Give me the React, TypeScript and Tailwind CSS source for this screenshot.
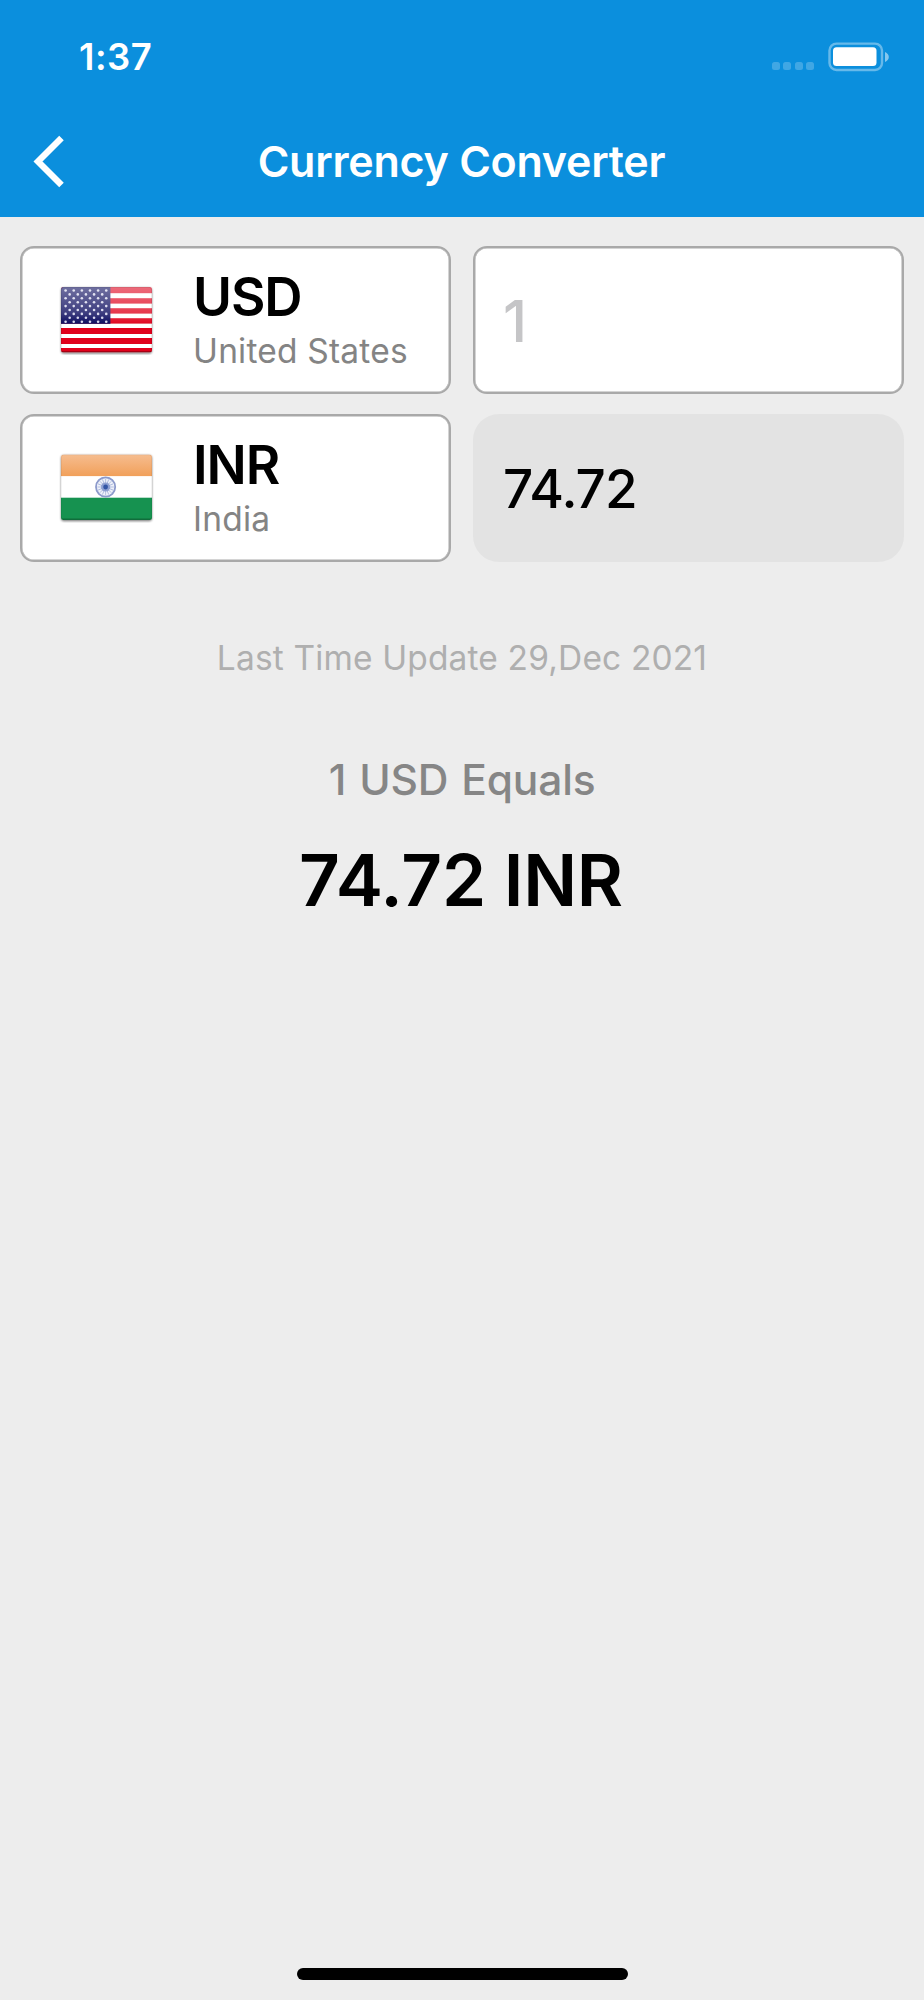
import React from "react";

const RED_STRIPES = [
  [0, 6.2],
  [11.2, 5.4],
  [21.2, 5.4],
  [31.2, 5.4],
  [41, 6],
  [51, 6],
  [61, 4.6],
];

function FlagUS() {
  const stars: { x: number; y: number }[] = [];
  for (let row = 0; row < 9; row++) {
    const odd = row % 2 === 1;
    for (let i = 0; i < (odd ? 5 : 6); i++) {
      stars.push({ x: 4.6 + i * 8.13 + (odd ? 4.07 : 0), y: 3.5 + row * 3.9 });
    }
  }
  return (
    <svg className="h-[70px] w-[95px]" viewBox="-2 -2 95 70" role="img" aria-label="United States flag">
      <defs>
        <clipPath id="us-clip">
          <rect width="91" height="65.6" rx="2.5" />
        </clipPath>
        <linearGradient id="us-gloss" x1="0" y1="0" x2="0" y2="1">
          <stop offset="0" stopColor="#fff" stopOpacity="0.42" />
          <stop offset="0.7" stopColor="#fff" stopOpacity="0.22" />
          <stop offset="1" stopColor="#fff" stopOpacity="0.02" />
        </linearGradient>
        <filter id="us-shadow" x="-5%" y="-5%" width="110%" height="115%">
          <feGaussianBlur stdDeviation="0.9" />
        </filter>
      </defs>
      <rect y="0.8" width="91" height="66" rx="3" fill="#000" opacity="0.5" filter="url(#us-shadow)" />
      <g clipPath="url(#us-clip)">
        <rect width="91" height="66" fill="#fff" />
        {RED_STRIPES.map(([y, h]) => (
          <rect key={y} y={y} width="91" height={h} fill="#e0001b" />
        ))}
        <rect width="49.4" height="36.8" fill="#08085c" />
        {stars.map((s, i) => (
          <circle key={i} cx={s.x} cy={s.y} r="1.3" fill="#d4d4ea" />
        ))}
        <rect width="91" height="36.8" fill="url(#us-gloss)" />
        <rect y="64" width="91" height="2" fill="#000" opacity="0.25" />
        <rect x="0.4" y="0.4" width="90.2" height="65" rx="2.5" fill="none" stroke="#000" strokeOpacity="0.12" strokeWidth="0.8" />
      </g>
    </svg>
  );
}

function FlagIN() {
  return (
    <svg className="h-[70px] w-[95px]" viewBox="-2 -1.4 95 70" role="img" aria-label="India flag">
      <defs>
        <clipPath id="in-clip">
          <rect width="91" height="65.6" rx="2.5" />
        </clipPath>
        <linearGradient id="in-saffron" x1="0" y1="0" x2="0" y2="1">
          <stop offset="0" stopColor="#f6bd90" />
          <stop offset="1" stopColor="#f1a05a" />
        </linearGradient>
        <filter id="in-shadow" x="-5%" y="-5%" width="110%" height="115%">
          <feGaussianBlur stdDeviation="0.9" />
        </filter>
      </defs>
      <rect y="0.8" width="91" height="66" rx="3" fill="#000" opacity="0.5" filter="url(#in-shadow)" />
      <g clipPath="url(#in-clip)">
        <rect width="91" height="66" fill="#fff" />
        <rect width="91" height="21.7" fill="url(#in-saffron)" />
        <rect y="43.3" width="91" height="23" fill="#169250" />
        <rect y="64" width="91" height="2" fill="#000" opacity="0.22" />
        <rect x="0.4" y="0.4" width="90.2" height="65" rx="2.5" fill="none" stroke="#000" strokeOpacity="0.08" strokeWidth="0.8" />
      </g>
      <circle cx="44.6" cy="32.6" r="9.6" fill="#eef1f9" stroke="#8c9acb" strokeWidth="1.8" />
      {Array.from({ length: 8 }, (_, i) => (
        <line
          key={i}
          x1="44.6"
          y1="24.4"
          x2="44.6"
          y2="40.8"
          stroke="#8f9fd0"
          strokeWidth="0.6"
          transform={`rotate(${i * 22.5} 44.6 32.6)`}
        />
      ))}
      <circle cx="44.6" cy="32.6" r="4.6" fill="#7f93cc" opacity="0.8" />
      <circle cx="44.6" cy="32.6" r="2.4" fill="#3355a5" />
    </svg>
  );
}

function StatusBar() {
  return (
    <div className="flex h-[105px] items-center justify-between pt-[9px] pr-[34px] pl-[79px]">
      <span className="text-[36.5px] leading-none font-semibold tracking-[0.5px]">1:37</span>
      <div className="flex items-center">
        <div className="mt-[18px] mr-[14px] flex gap-[3.5px]">
          {[0, 1, 2, 3].map((i) => (
            <span key={i} className="size-[8px] rounded-[2.5px] bg-white/22" />
          ))}
        </div>
        <svg className="h-[30px] w-[62px]" viewBox="0 0 62 30" fill="none">
          <rect x="1.5" y="1.6" width="52.5" height="26.4" rx="7" stroke="#fff" strokeOpacity="0.38" strokeWidth="2.4" />
          <rect x="5" y="5.3" width="43.5" height="18.7" rx="3.5" fill="#fff" />
          <path d="M57 10 C59.6 11.2 60.8 13 60.8 15 C60.8 17 59.6 18.8 57 20 Z" fill="#fff" fillOpacity="0.5" />
        </svg>
      </div>
    </div>
  );
}

function NavBar() {
  return (
    <div className="grid h-[112px] grid-cols-[1fr_auto_1fr] items-center">
      <button type="button" aria-label="Back" className="pl-[32px]">
        <svg className="h-[54px] w-[36px]" viewBox="0 0 36 54" fill="none">
          <path d="M29.5 4 L6 27.5 L29.5 51" stroke="#fff" strokeWidth="6.4" />
        </svg>
      </button>
      <h1 className="pr-px text-[43px] leading-none font-semibold tracking-[-0.25px]">Currency Converter</h1>
      <span />
    </div>
  );
}

function CurrencyCard({ flag, code, country }: { flag: React.ReactNode; code: string; country: string }) {
  return (
    <button
      type="button"
      className="flex h-[148px] items-center rounded-[14px] border-2 border-[#a9a9a9] bg-white pl-[37px] text-left shadow-[inset_0_0_0_0.5px_#a9a9a9]"
    >
      {flag}
      <span className="mt-[7px] ml-[39px] flex flex-col whitespace-nowrap">
        <span className="text-[53px] leading-[54px] font-semibold tracking-[-1.1px] text-black">{code}</span>
        <span className="text-[33.5px] leading-[54px] tracking-[0.2px] text-[#848484]">{country}</span>
      </span>
    </button>
  );
}

export default function App() {
  return (
    <div className="flex h-[2000px] w-[924px] flex-col bg-[#ededed] font-['Inter',sans-serif]">
      <header className="h-[217px] bg-[#0b8fdd] text-white">
        <StatusBar />
        <NavBar />
      </header>

      <main className="flex flex-1 flex-col pt-[29px]">
        <section className="grid grid-cols-2 gap-x-[22px] gap-y-5 px-5">
          <CurrencyCard flag={<FlagUS />} code="USD" country="United States" />
          <input
            aria-label="Amount"
            placeholder="1"
            className="h-[148px] w-full rounded-[14px] border-2 border-[#a9a9a9] bg-white pt-[2px] pl-[28px] text-[58px] font-medium shadow-[inset_0_0_0_0.5px_#a9a9a9] outline-none placeholder:text-[#c5c5c7]"
          />
          <CurrencyCard flag={<FlagIN />} code="INR" country="India" />
          <div className="flex h-[148px] items-center rounded-[26px] bg-[#e3e3e3] pt-[2px] pl-[30px] text-[53px] leading-none font-medium tracking-[-0.9px] text-black">
            74.72
          </div>
        </section>

        <section className="flex flex-col items-center pt-[72px] text-center">
          <p className="text-[33.5px] leading-[48px] tracking-[0.15px] text-[#afafaf]">Last Time Update 29,Dec 2021</p>
          <p className="mt-[68px] text-[42.5px] leading-[60px] font-medium tracking-[-0.2px] text-[#868686] [word-spacing:2px]">
            1 USD Equals
          </p>
          <p className="mt-[25px] pr-[2px] text-[71px] leading-[90px] font-semibold tracking-[-0.2px] text-black">
            74.72 INR
          </p>
        </section>
      </main>

      <footer className="flex justify-center pb-[20px]">
        <span className="h-[12.5px] w-[331px] rounded-full bg-black" />
      </footer>
    </div>
  );
}
